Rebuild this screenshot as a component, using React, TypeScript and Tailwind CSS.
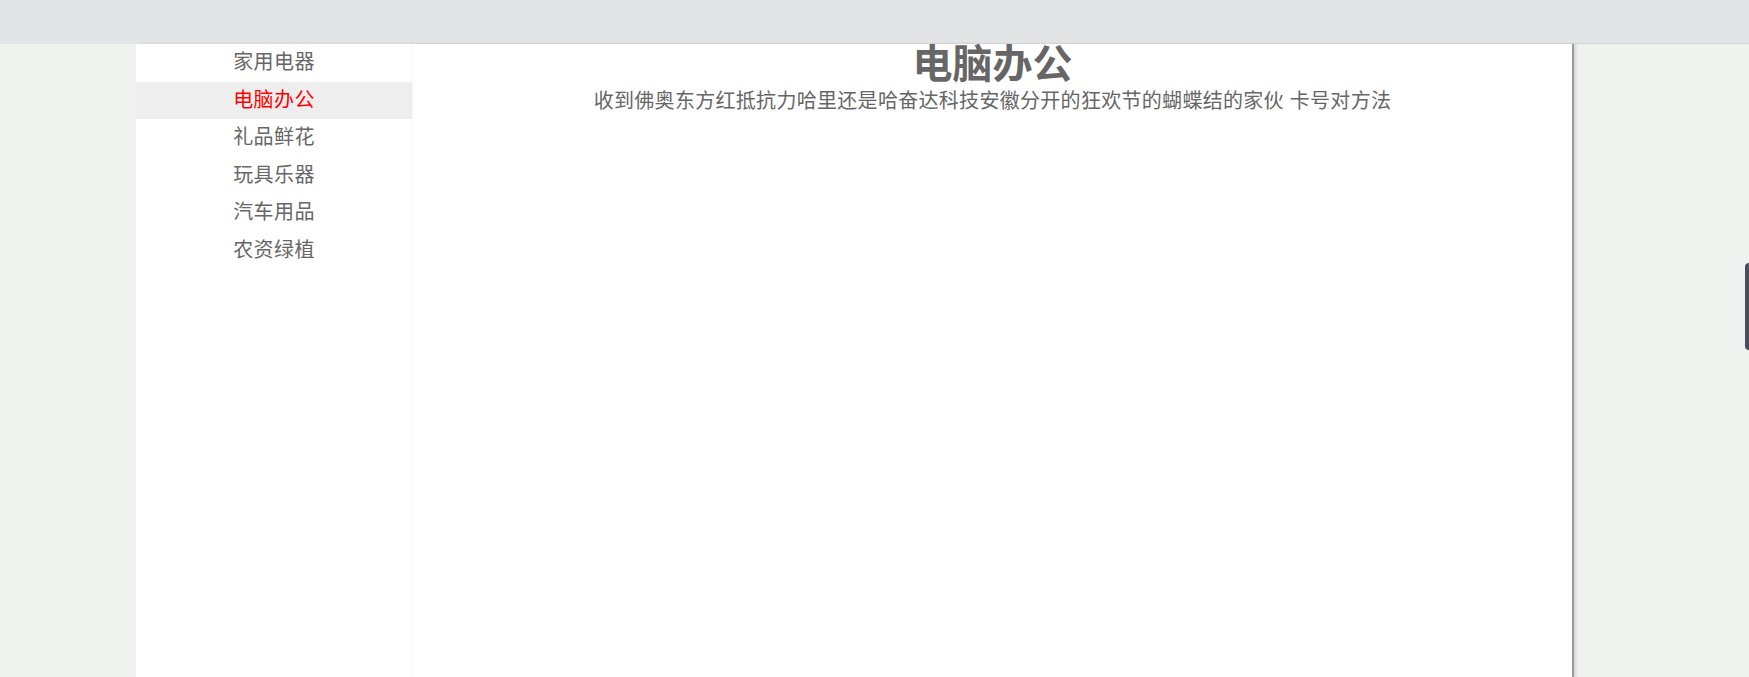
import React from "react";

const categories = ["家用电器", "电脑办公", "礼品鲜花", "玩具乐器", "汽车用品", "农资绿植"];

export default function App() {
  const active = 1;

  return (
    <div
      className="relative h-[677px] w-full overflow-hidden bg-[#f0f2f0]"
      style={{ fontFamily: '"Liberation Sans", "Noto Sans CJK SC", sans-serif' }}
    >
      {/* top bar */}
      <div className="flex h-[44px] w-full bg-[#e3e4e6]">
        <div className="w-[413px]" />
        <div className="mt-auto h-px flex-1 bg-[#d4d5d7]" />
      </div>

      <div className="ml-[136px] flex h-[633px] w-[1436px] bg-white shadow-[2px_0_0_#9a9a9a,4px_0_3px_rgba(0,0,0,0.12)]">
        {/* sidebar */}
        <ul className="w-[277px] shrink-0 border-r border-[#f6f6f6]">
          {categories.map((name, i) => (
            <li
              key={name}
              className={
                i === active
                  ? "bg-[#eeeeee] text-center text-[20px] leading-[37.5px] tracking-[0.4px] text-[#ff0000]"
                  : "text-center text-[20px] leading-[37.5px] tracking-[0.4px] text-[#666666]"
              }
            >
              {name}
            </li>
          ))}
        </ul>

        {/* content */}
        <div className="flex-1 text-center text-[#666666]">
          <h1 className="text-[40px] font-bold leading-[41px]">电脑办公</h1>
          <p className="text-[20px] leading-[33px] tracking-[0.3px]">
            收到佛奥东方红抵抗力哈里还是哈奋达科技安徽分开的狂欢节的蝴蝶结的家伙 卡号对方法
          </p>
        </div>
      </div>

      {/* edge handle */}
      <div className="absolute right-0 top-[263px] h-[87px] w-[4px] rounded-l-[4px] bg-[#4a4d5a]" />
    </div>
  );
}
